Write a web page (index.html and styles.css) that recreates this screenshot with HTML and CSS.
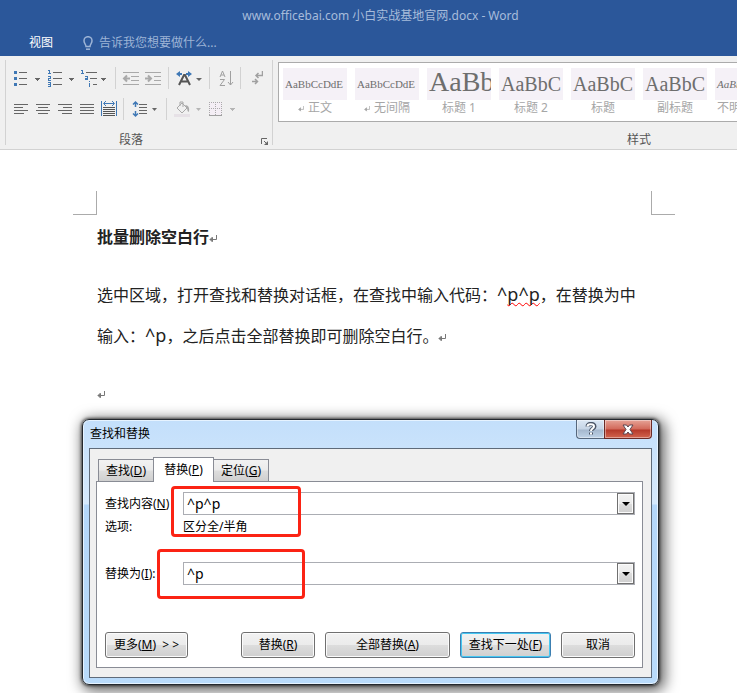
FILE: index.html
```
<!DOCTYPE html>
<html lang="zh-CN">
    <head>
        <meta charset="utf-8">
        <meta name="viewport" content="width=device-width">
        <title>小白实战基地官网.docx - Word</title>
        <link rel="stylesheet" href="styles.css">
    </head>
    <body>
        <svg class="symbols" aria-hidden="true">
            <symbol id="mark" viewBox="0 0 8 8">
                <path d="M7.500 0v4.500H1M3.500 2L1 4.500 3.500 7" fill="none" stroke="currentColor"/>
                <path d="M4 2v5L1 4.500z" fill="currentColor"/>
            </symbol>
        </svg>

        <header class="topbar">
            <div class="doc-title">www.officebai.com 小白实战基地官网.docx - Word</div>
            <nav class="menu">
                <a class="menu-tab" href="#view">视图</a>
                <a class="tell-me" href="#help">
                    <svg width="10" height="15" viewBox="0 0 10 15" fill="none" stroke="currentColor" stroke-width="1.5"><path d="M3 10.5C3 8 1 7.500 1 4.700a4 4 0 0 1 8 0C9 7.500 7 8 7 10.500z"/><path d="M3 13.200h4"/></svg>
                    <span>告诉我您想要做什么...</span>
                </a>
            </nav>
        </header>

        <div class="ribbon">
            <section class="group group-paragraph">
                <div class="tools">
                    <button class="tool" aria-label="项目符号">
                        <svg width="28" height="18" shape-rendering="crispEdges"><g fill="#3f78b5"><path d="M1 2h3v3H1zM1 8h3v3H1zM1 14h3v3H1z"/></g><path d="M6 3.500h8M6 9.500h8M6 15.500h8" stroke="#666"/><path d="M22 9h5l-2.500 3z" fill="#666"/></svg>
                    </button>
                    <button class="tool" aria-label="编号">
                        <svg width="28" height="18" shape-rendering="crispEdges"><path d="M1 1.500h1.500v3M1 4.500h3M1 7.500h2.500v2h-2v2H4M1 13.500h2.500v4H1M1 15.500h2" fill="none" stroke="#3f78b5"/><path d="M6 3.500h9M6 9.500h9M6 15.500h9" stroke="#666"/><path d="M22 9h5l-2.500 3z" fill="#666"/></svg>
                    </button>
                    <button class="tool" aria-label="多级列表">
                        <svg width="28" height="18" shape-rendering="crispEdges"><path d="M0 1.500h1.500v3M0 4.500h3M4 7.500h2.500v3H4.500v-1.500h2M8.500 14v4M8.500 11.500v1" fill="none" stroke="#3f78b5"/><path d="M5 3.500h11M9 9.500h7M12 15.500h4" stroke="#666"/><path d="M20 9h5l-2.500 3z" fill="#666"/></svg>
                    </button>
                    <span class="divider"></span>
                    <button class="tool" aria-label="减少缩进量" disabled>
                        <svg width="17" height="18" stroke="#a9a9a9" fill="none"><path d="M1 3.500h16M9 7.500h8M9 11.500h8M1 15.500h16"/><path d="M8 9.500H2M5 6.500l-3 3 3 3" stroke-width="2"/></svg>
                    </button>
                    <button class="tool" aria-label="增加缩进量" disabled>
                        <svg width="17" height="18" stroke="#a9a9a9" fill="none"><path d="M0 3.500h16M9 7.500h7M9 11.500h7M0 15.500h16"/><path d="M0 9.500h6M3 6.500l3 3-3 3" stroke-width="2"/></svg>
                    </button>
                    <span class="divider"></span>
                    <button class="tool" aria-label="中文版式">
                        <svg width="28" height="18"><path d="M4 16L9 6h1l5 10M6 12.500h7" fill="none" stroke="#555" stroke-width="2"/><path d="M1 5l4-3v2h2v2H5v2zM17 5l-4-3v2h-2v2h2v2z" fill="#3f78b5"/><path d="M21 9h6l-3 3z" fill="#666"/></svg>
                    </button>
                    <span class="divider"></span>
                    <button class="tool" aria-label="排序" disabled>
                        <svg width="18" height="18" fill="none" stroke="#a0a0a0"><path d="M4 8l2.500-6L9 8M5 6h3M4 10.500h4.500L4 16.500h5M14.500 2v14M12 13l2.500 3 2.500-3"/></svg>
                    </button>
                    <span class="divider"></span>
                    <button class="tool" aria-label="显示编辑标记" disabled>
                        <svg width="16" height="18" fill="none" stroke="#a0a0a0"><path d="M15.500 2v4.500H9M11.500 4L9 6.500 11.500 9M5 12.500h5M8 10l2.500 2.500L8 15" stroke-width="1.500"/></svg>
                    </button>
                </div>
                <div class="tools">
                    <button class="tool" aria-label="左对齐">
                        <svg width="16" height="18" stroke="#666"><path d="M1 4.500h14M1 7.500h9M1 10.500h14M1 13.500h10"/></svg>
                    </button>
                    <button class="tool" aria-label="居中">
                        <svg width="16" height="18" stroke="#666"><path d="M1 4.500h14M3 7.500h10M1 10.500h14M3 13.500h10"/></svg>
                    </button>
                    <button class="tool" aria-label="右对齐">
                        <svg width="16" height="18" stroke="#666"><path d="M1 4.500h14M6 7.500h9M1 10.500h14M5 13.500h10"/></svg>
                    </button>
                    <button class="tool" aria-label="两端对齐">
                        <svg width="16" height="18" stroke="#666"><path d="M1 4.500h14M1 7.500h14M1 10.500h14M1 13.500h14"/></svg>
                    </button>
                    <button class="tool" aria-label="分散对齐">
                        <svg width="16" height="18" fill="none"><path d="M2 7.500h12M2 9.500h12M2 11.500h12M2 13.500h12M2 15.500h12" stroke="#555"/><path d="M.5 1v15M15.500 1v15M3 3.500h10M5 1L2.500 3.500 5 6M11 1l2.500 2.500L11 6" stroke="#3f78b5"/></svg>
                    </button>
                    <span class="divider"></span>
                    <button class="tool" aria-label="行和段落间距">
                        <svg width="30" height="18" fill="none"><path d="M5.500 2v5M5.500 11v5M3 4.500L5.500 2 8 4.500M3 13.500L5.500 16 8 13.500" stroke="#3f78b5" stroke-width="1.500"/><path d="M9 4.500h8M9 7.500h8M9 10.500h8M9 13.500h8" stroke="#666"/><path d="M22 8h5l-2.500 3z" fill="#666"/></svg>
                    </button>
                    <span class="divider"></span>
                    <button class="tool" aria-label="底纹" disabled>
                        <svg width="28" height="18" fill="none"><path d="M1 14h16v3H1z" fill="#e6e1e6"/><path d="M4 8l5-5 5 5-5 5zM7 6V2h3v5" stroke="#a9a9a9"/><path d="M12 5q5 0 4 7q-2-1-2-4z" fill="#a9a9a9"/><path d="M23 8h5l-2.500 3z" fill="#b5b5b5"/></svg>
                    </button>
                    <button class="tool" aria-label="边框" disabled>
                        <svg width="28" height="18" fill="none" shape-rendering="crispEdges"><path d="M2 2h13v13H2z" fill="#f4eef5"/><path d="M2 2.500h13M2 8.500h13M2.500 2v13M8.500 2v13M14.500 2v13" stroke="#aaa" stroke-dasharray="1 1"/><path d="M2 15.500h13" stroke="#a0a0a0"/><path d="M23 8h5l-2.500 3z" fill="#b5b5b5"/></svg>
                    </button>
                </div>
                <div class="group-name">段落</div>
                <button class="launcher" aria-label="段落设置">
                    <svg width="8" height="8" fill="none" stroke="#666"><path d="M.5 6V.5H6M3 3l3 3"/><path d="M7 3v4H3z" fill="#666" stroke="none"/></svg>
                </button>
            </section>

            <section class="group group-styles">
                <div class="gallery">
                    <button class="style"><span class="sample">AaBbCcDdE</span><span class="style-name"><svg class="style-mark"><use href="#mark"/></svg>正文</span></button>
                    <button class="style"><span class="sample">AaBbCcDdE</span><span class="style-name"><svg class="style-mark"><use href="#mark"/></svg>无间隔</span></button>
                    <button class="style"><span class="sample sample-big">AaBb</span><span class="style-name">标题 1</span></button>
                    <button class="style"><span class="sample sample-mid">AaBbC</span><span class="style-name">标题 2</span></button>
                    <button class="style"><span class="sample sample-mid">AaBbC</span><span class="style-name">标题</span></button>
                    <button class="style"><span class="sample sample-mid">AaBbC</span><span class="style-name">副标题</span></button>
                    <button class="style"><span class="sample sample-italic">AaBbCcDdE</span><span class="style-name">不明显强调</span></button>
                </div>
                <div class="group-name">样式</div>
            </section>
        </div>

        <main class="page">
            <div class="corners">
                <span class="corner corner-left"></span>
                <span class="corner corner-right"></span>
            </div>
            <article class="text">
                <h1>批量删除空白行<svg class="para-mark"><use href="#mark"/></svg></h1>
                <p>选中区域，打开查找和替换对话框，在查找中输入代码：<span class="code">^<span class="misspelt">p^p</span></span>，在替换为中输入：<span class="code">^p</span>，之后点击全部替换即可删除空白行。<svg class="para-mark"><use href="#mark"/></svg></p>
                <p class="empty"><svg class="para-mark"><use href="#mark"/></svg></p>
            </article>
        </main>

        <div class="dialog" role="dialog" aria-labelledby="dialog-title">
            <div class="dialog-bar">
                <h2 id="dialog-title">查找和替换</h2>
                <div class="window-buttons">
                    <button class="help" aria-label="帮助">
                        <svg width="12" height="14" viewBox="0 0 12 14" fill="none"><path d="M2.500 4.500C2.500 1 9.500 1 9.500 4.500 9.500 6.500 6 6.500 6 9M6 10.500v2" stroke="#4b5566" stroke-width="4"/><path d="M2.500 4.500C2.500 1.500 9 1.500 9 4.500 9 6.500 6 6.500 6 9M6 10.500v2" stroke="#fff" stroke-width="2"/></svg>
                    </button>
                    <button class="close" aria-label="关闭">
                        <svg width="12" height="11" viewBox="0 0 12 11"><path d="M1 1h3.500L6 3l1.500-2H11L8 5.500 11 10H7.500L6 8l-1.500 2H1l3-4.500z" fill="#fff" stroke="#5a4550"/></svg>
                    </button>
                </div>
            </div>
            <div class="client">
                <div class="tabs" role="tablist">
                    <button class="tab" role="tab">查找(<u>D</u>)</button>
                    <button class="tab tab-active" role="tab" aria-selected="true">替换(<u>P</u>)</button>
                    <button class="tab" role="tab">定位(<u>G</u>)</button>
                </div>
                <form class="panel">
                    <div class="field-block">
                        <div class="row">
                            <label for="find">查找内容(<u>N</u>)</label>
                            <div class="combo">
                                <input id="find" type="text" value="^p^p">
                                <button type="button" class="drop" aria-label="查找记录"><svg width="8" height="4"><path d="M0 0h8L4 4z"/></svg></button>
                            </div>
                        </div>
                        <div class="row">
                            <span>选项:</span>
                            <span>区分全/半角</span>
                        </div>
                        <span class="highlight highlight-find"></span>
                    </div>
                    <div class="field-block">
                        <div class="row">
                            <label for="replace">替换为(<u>I</u>):</label>
                            <div class="combo">
                                <input id="replace" type="text" value="^p">
                                <button type="button" class="drop" aria-label="替换记录"><svg width="8" height="4"><path d="M0 0h8L4 4z"/></svg></button>
                            </div>
                        </div>
                        <span class="highlight highlight-replace"></span>
                    </div>
                    <div class="actions">
                        <button type="button" class="btn btn-more">更多(<u>M</u>)&nbsp; &gt; &gt;</button>
                        <button type="button" class="btn">替换(<u>R</u>)</button>
                        <button type="button" class="btn btn-wide">全部替换(<u>A</u>)</button>
                        <button type="button" class="btn btn-default">查找下一处(<u>F</u>)</button>
                        <button type="button" class="btn">取消</button>
                    </div>
                </form>
            </div>
        </div>
    </body>
</html>
```
FILE: styles.css
```
*, *:before, *:after {
    box-sizing: border-box;
}

body {
    margin: 0;
    min-height: 100vh;
    position: relative;
    overflow: hidden;
    background-color: #fff;
    color: #000;
    font-family: "Noto Sans", "Noto Sans CJK SC", sans-serif;
    font-size: 12px;
    line-height: 16px;
}

button, input {
    font: inherit;
    color: inherit;
    margin: 0;
    padding: 0;
}

a {
    color: inherit;
    text-decoration: none;
}

svg {
    display: block;
}

.symbols {
    position: absolute;
    width: 0;
    height: 0;
}

/* title bar */

.topbar {
    background-color: #2b579a;
    height: 56px;
    white-space: nowrap;
}

.doc-title {
    padding: 8px 0 8px 24px;
    text-align: center;
    color: #a7bcdb;
}

.menu {
    display: flex;
    align-items: center;
    gap: 30px;
    padding-left: 29px;
    height: 22px;
}

.menu-tab {
    color: #fff;
}

.tell-me {
    display: flex;
    align-items: center;
    gap: 6px;
    color: #9db4d6;
}

/* ribbon */

.ribbon {
    display: flex;
    height: 94px;
    padding: 4px 0 4px 5px;
    overflow: hidden;
    background-color: #f0f0f0;
    border-bottom: 1px solid #d2d2d2;
}

.group {
    flex: none;
    position: relative;
}

.group-paragraph {
    width: 268px;
    padding: 9px 7px 0;
    border: solid #d2d2d2;
    border-width: 0 1px;
}

.tools {
    display: flex;
    align-items: center;
    gap: 6px;
    height: 18px;
    margin-bottom: 13px;
}

.tool, .launcher {
    border: 0;
    background: none;
}

.divider {
    width: 1px;
    height: 22px;
    flex: none;
    background-color: #d2d2d2;
}

.group-name {
    position: absolute;
    left: 0;
    right: 0;
    bottom: -3px;
    text-align: center;
    color: #555;
}

.group-paragraph .group-name {
    right: 16px;
}

.launcher {
    position: absolute;
    right: 3px;
    bottom: -1px;
}

.group-styles {
    width: 732px;
    padding: 2px 5px;
}

.gallery {
    display: flex;
    gap: 8px;
    height: 60px;
    padding: 5px 4px;
    background-color: #fff;
    border: 1px solid #ababab;
}

.style {
    width: 64px;
    border: 0;
    background: none;
    color: #a6a6a6;
}

.sample {
    display: block;
    height: 32px;
    padding: 0 2px;
    overflow: hidden;
    background-color: #f5f1f7;
    color: #6e6e6e;
    font-family: "Liberation Serif", serif;
    font-size: 11px;
    line-height: 32px;
    text-align: left;
    white-space: nowrap;
}

.sample-mid {
    font-size: 20px;
}

.sample-big {
    font-size: 28px;
    line-height: 28px;
}

.sample-italic {
    font-style: italic;
}

.style-name {
    display: flex;
    justify-content: center;
    gap: 4px;
    white-space: nowrap;
}

.style-mark {
    width: 6px;
    height: 6px;
    margin-top: 6px;
}

/* document */

.page {
    padding: 41px 62px 0 73px;
}

.corners {
    display: flex;
    justify-content: space-between;
}

.corner {
    width: 24px;
    height: 24px;
    border: 0 solid #ababab;
    border-bottom-width: 1px;
}

.corner-left {
    border-right-width: 1px;
}

.corner-right {
    border-left-width: 1px;
}

.text {
    padding: 0 24px;
    color: #222;
    font-size: 16px;
    font-family: "Noto Sans CJK SC", sans-serif;
}

.text h1 {
    margin: 9px 0 26px;
    font-size: 16px;
    line-height: 24px;
}

.text p {
    margin: 0 0 16px;
    line-height: 41px;
}

.code {
    font-family: "Noto Sans", sans-serif;
    font-size: 18px;
}

.misspelt {
    text-decoration: underline wavy #f00 1px;
    text-decoration-skip-ink: none;
}

.para-mark {
    display: inline-block;
    width: 8px;
    height: 8px;
    color: #777;
}

/* find and replace */

.dialog {
    position: absolute;
    top: 419px;
    left: 82px;
    right: 78px;
    padding: 0 6px 6px;
    border: 1px solid #23282e;
    border-radius: 7px;
    background: linear-gradient(#c3dffb, #d6e9fc 84px, #b4d7fa 85px, #b9dbfb);
    box-shadow: inset 0 0 0 1px #e6f3ff, 0 0 3px 1px rgba(0, 0, 0, .6), 3px 3px 14px 3px rgba(0, 0, 0, .6);
}

.dialog-bar {
    display: flex;
    justify-content: space-between;
    height: 28px;
}

.dialog-bar h2 {
    margin: 0;
    padding: 6px 0 0 1px;
    font-size: 12px;
    font-weight: normal;
}

.window-buttons {
    display: flex;
    height: 19px;
}

.window-buttons button {
    display: flex;
    align-items: center;
    justify-content: center;
    border: 1px solid #56677c;
    border-top: 0;
    box-shadow: inset 0 0 0 1px rgba(255, 255, 255, .4);
}

.window-buttons .help {
    width: 28px;
    border-right: 0;
    border-radius: 0 0 0 4px;
    background: linear-gradient(#dce8f5, #c5d4e5 9px, #a5b8ce 10px, #bfd3e8);
}

.window-buttons .close {
    width: 48px;
    border-color: #6b2a26;
    border-radius: 0 0 4px 0;
    background: linear-gradient(#e6a497, #d2695a 9px, #b5392a 10px, #d2654f);
}

.client {
    padding: 8px 8px 9px 6px;
    border: 1px solid #5f6b7a;
    background-color: #f0f0f0;
}

.tabs {
    display: flex;
    align-items: flex-end;
    height: 24px;
    padding-left: 2px;
}

.tab {
    width: 56px;
    height: 22px;
    border: 1px solid #898c95;
    border-bottom: 0;
    background: linear-gradient(#f2f2f2, #ebebeb 10px, #dddddd 11px, #cfcfcf);
}

.tab-active {
    z-index: 1;
    width: 61px;
    height: 25px;
    margin: 0 -1px;
    background: #fff;
    /* covers the top line of the panel */
    margin-bottom: -1px;
}

.panel {
    padding: 10px 7px 9px 8px;
    border: 1px solid #898c95;
    background-color: #fff;
}

.field-block {
    position: relative;
    margin-bottom: 24px;
}

.row {
    display: grid;
    grid-template-columns: 78px 1fr;
    line-height: 23px;
    white-space: nowrap;
}

.combo {
    display: flex;
    height: 23px;
    border: 1px solid #abadb3;
}

.combo input {
    flex: 1;
    min-width: 0;
    padding: 0 3px;
    border: 0;
    outline: 0;
    font-size: 14px;
}

.drop {
    display: flex;
    align-items: center;
    justify-content: center;
    width: 17px;
    border: 1px solid #707070;
    background: linear-gradient(#f2f2f2, #ebebeb 50%, #dddddd 50%, #cfcfcf);
    box-shadow: inset 0 0 0 1px #fbfbfb;
}

.highlight {
    position: absolute;
    border: 3px solid #fb2314;
    border-radius: 4px;
    pointer-events: none;
}

.highlight-find {
    top: -6px;
    left: 66px;
    width: 130px;
    height: 51px;
}

.highlight-replace {
    top: -13px;
    left: 52px;
    width: 148px;
    height: 50px;
}

.actions {
    display: flex;
    gap: 10px;
    padding-top: 23px;
}

.btn {
    width: 74px;
    height: 26px;
    border: 1px solid #707070;
    border-radius: 3px;
    background: linear-gradient(#f2f2f2, #ebebeb 50%, #dddddd 50%, #cfcfcf);
    box-shadow: inset 0 0 0 1px #fbfbfb;
    white-space: nowrap;
}

.btn-more {
    width: 83px;
    margin-right: auto;
}

.btn-wide {
    width: 125px;
}

.btn-default {
    width: 91px;
    border-color: #3c7fb1;
    box-shadow: inset 0 0 0 1px #46c8f2;
}
```
